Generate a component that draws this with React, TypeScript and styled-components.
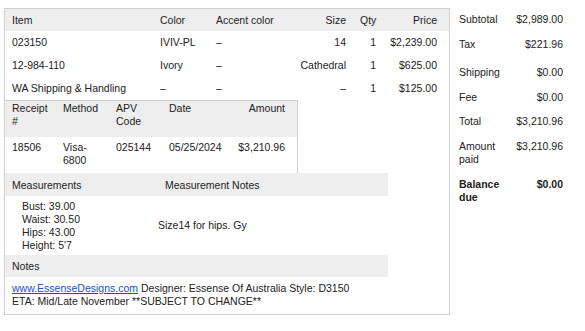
import React from 'react';
import styled, { createGlobalStyle } from 'styled-components';

const GlobalStyle = createGlobalStyle`
  body {
    margin: 0;
    background: #fff;
    font-family: "Liberation Sans", Arial, sans-serif;
    font-size: 10.5px;
    color: #222;
  }
`;

// Page: order box on the left, totals on the right
const Page = styled.div`
  display: flex;
  align-items: flex-start;
  padding: 8px 0 0 4px;
`;

const OrderBox = styled.div`
  width: 446px;
  height: 307px;
  box-sizing: border-box;
  border: 1px solid #cfcfcf;
  display: flex;
  flex-direction: column;
`;

const Table = styled.table`
  width: 100%;
  border-collapse: collapse;
  table-layout: fixed;
  font-size: 10.5px;
  line-height: 13px;
`;

const HeadCell = styled.th<{ $right?: boolean; $pad?: number }>`
  background: #eeeeee;
  font-weight: normal;
  text-align: ${({ $right }) => ($right ? 'right' : 'left')};
  vertical-align: top;
  padding: 4px ${({ $pad }) => $pad ?? 7}px 4px 7px;
`;

const Cell = styled.td<{ $right?: boolean; $pad?: number }>`
  text-align: ${({ $right }) => ($right ? 'right' : 'left')};
  vertical-align: top;
  padding: 4px ${({ $pad }) => $pad ?? 7}px 4px 7px;
`;

// Line-item rows
const ItemHead = styled(HeadCell)`
  height: 22px;
  box-sizing: border-box;
  vertical-align: middle;
  padding-top: 0;
  padding-bottom: 0;
`;

const ItemCell = styled(Cell)`
  height: 23px;
  box-sizing: border-box;
  vertical-align: middle;
  padding-top: 0;
  padding-bottom: 0;
`;

const ReceiptBox = styled.div`
  width: 292px;
  border-top: 1px solid #cfcfcf;
  border-right: 1px solid #cfcfcf;
`;

const ReceiptHead = styled(HeadCell)`
  height: 36px;
  box-sizing: border-box;
  padding-top: 1px;
  padding-bottom: 0;
`;

const ReceiptCell = styled(Cell)`
  height: 36px;
  box-sizing: border-box;
  padding-top: 4px;
  padding-bottom: 0;
`;

const Section = styled.div`
  width: 383px;
`;

const SectionHead = styled.div<{ $height?: number }>`
  background: #eeeeee;
  height: ${({ $height }) => $height ?? 23}px;
  display: flex;
  align-items: center;
  padding-left: 7px;
`;

const HeadLabel = styled.span<{ $width?: number }>`
  width: ${({ $width }) => ($width ? `${$width}px` : 'auto')};
`;

const MeasureBody = styled.div`
  display: flex;
  align-items: center;
  height: 59px;
  line-height: 13px;
`;

const MeasureList = styled.div`
  width: 136px;
  padding-left: 17px;
  padding-top: 1px;
`;

const NotesBody = styled.div`
  padding: 5px 7px 0;
  line-height: 13px;
`;

const Link = styled.a`
  color: #1a4fd6;
  text-decoration: underline;
`;

// Right-hand totals column
const Totals = styled.div`
  padding: 5px 0 0 9px;
  width: 104px;
`;

const TotalRow = styled.div<{ $extra?: number; $bold?: boolean }>`
  display: flex;
  align-items: flex-start;
  line-height: 13px;
  margin-bottom: ${({ $extra }) => 12 + ($extra || 0)}px;
  font-weight: ${({ $bold }) => ($bold ? 'bold' : 'normal')};
`;

const TotalLabel = styled.span`
  width: 52px;
`;

const TotalValue = styled.span`
  flex: 1;
  text-align: right;
  white-space: nowrap;
`;

const items = [
  { item: '023150', color: 'IVIV-PL', accent: '–', size: '14', qty: '1', price: '$2,239.00' },
  { item: '12-984-110', color: 'Ivory', accent: '–', size: 'Cathedral', qty: '1', price: '$625.00' },
  { item: 'WA Shipping & Handling', color: '–', accent: '–', size: '–', qty: '1', price: '$125.00' },
];

const totals = [
  { label: 'Subtotal', value: '$2,989.00' },
  { label: 'Tax', value: '$221.96', extra: 3 },
  { label: 'Shipping', value: '$0.00' },
  { label: 'Fee', value: '$0.00', extra: -1 },
  { label: 'Total', value: '$3,210.96' },
  { label: 'Amount paid', value: '$3,210.96' },
  { label: 'Balance due', value: '$0.00', bold: true },
];

export default function App() {
  return (
    <>
      <GlobalStyle />
      <Page>
        <OrderBox>
          <Table>
            <colgroup>
              <col style={{ width: 148 }} />
              <col style={{ width: 56 }} />
              <col style={{ width: 84 }} />
              <col style={{ width: 60 }} />
              <col style={{ width: 30 }} />
              <col style={{ width: 66 }} />
            </colgroup>
            <thead>
              <tr>
                <ItemHead>Item</ItemHead>
                <ItemHead>Color</ItemHead>
                <ItemHead>Accent color</ItemHead>
                <ItemHead $right>Size</ItemHead>
                <ItemHead $right>Qty</ItemHead>
                <ItemHead $right $pad={12}>Price</ItemHead>
              </tr>
            </thead>
            <tbody>
              {items.map(r => (
                <tr key={r.item}>
                  <ItemCell>{r.item}</ItemCell>
                  <ItemCell>{r.color}</ItemCell>
                  <ItemCell>{r.accent}</ItemCell>
                  <ItemCell $right>{r.size}</ItemCell>
                  <ItemCell $right>{r.qty}</ItemCell>
                  <ItemCell $right $pad={12}>{r.price}</ItemCell>
                </tr>
              ))}
            </tbody>
          </Table>

          <ReceiptBox>
            <Table>
              <colgroup>
                <col style={{ width: 51 }} />
                <col style={{ width: 53 }} />
                <col style={{ width: 53 }} />
                <col style={{ width: 67 }} />
                <col style={{ width: 68 }} />
              </colgroup>
              <thead>
                <tr>
                  <ReceiptHead>Receipt #</ReceiptHead>
                  <ReceiptHead>Method</ReceiptHead>
                  <ReceiptHead>APV Code</ReceiptHead>
                  <ReceiptHead>Date</ReceiptHead>
                  <ReceiptHead $right $pad={12}>Amount</ReceiptHead>
                </tr>
              </thead>
              <tbody>
                <tr>
                  <ReceiptCell>18506</ReceiptCell>
                  <ReceiptCell>Visa-6800</ReceiptCell>
                  <ReceiptCell>025144</ReceiptCell>
                  <ReceiptCell>05/25/2024</ReceiptCell>
                  <ReceiptCell $right $pad={12}>$3,210.96</ReceiptCell>
                </tr>
              </tbody>
            </Table>
          </ReceiptBox>

          <Section>
            <SectionHead>
              <HeadLabel $width={153}>Measurements</HeadLabel>
              <HeadLabel>Measurement Notes</HeadLabel>
            </SectionHead>
            <MeasureBody>
              <MeasureList>
                <div>Bust: 39.00</div>
                <div>Waist: 30.50</div>
                <div>Hips: 43.00</div>
                <div>Height: 5'7</div>
              </MeasureList>
              <span>Size14 for hips. Gy</span>
            </MeasureBody>
            <SectionHead $height={22}>
              <HeadLabel>Notes</HeadLabel>
            </SectionHead>
          </Section>
          <NotesBody>
            <Link href="#">www.EssenseDesigns.com</Link> Designer: Essense Of Australia Style: D3150
            <br />
            ETA: Mid/Late November **SUBJECT TO CHANGE**
          </NotesBody>
        </OrderBox>

        <Totals>
          {totals.map(t => (
            <TotalRow key={t.label} $extra={t.extra} $bold={t.bold}>
              <TotalLabel>{t.label}</TotalLabel>
              <TotalValue>{t.value}</TotalValue>
            </TotalRow>
          ))}
        </Totals>
      </Page>
    </>
  );
}
